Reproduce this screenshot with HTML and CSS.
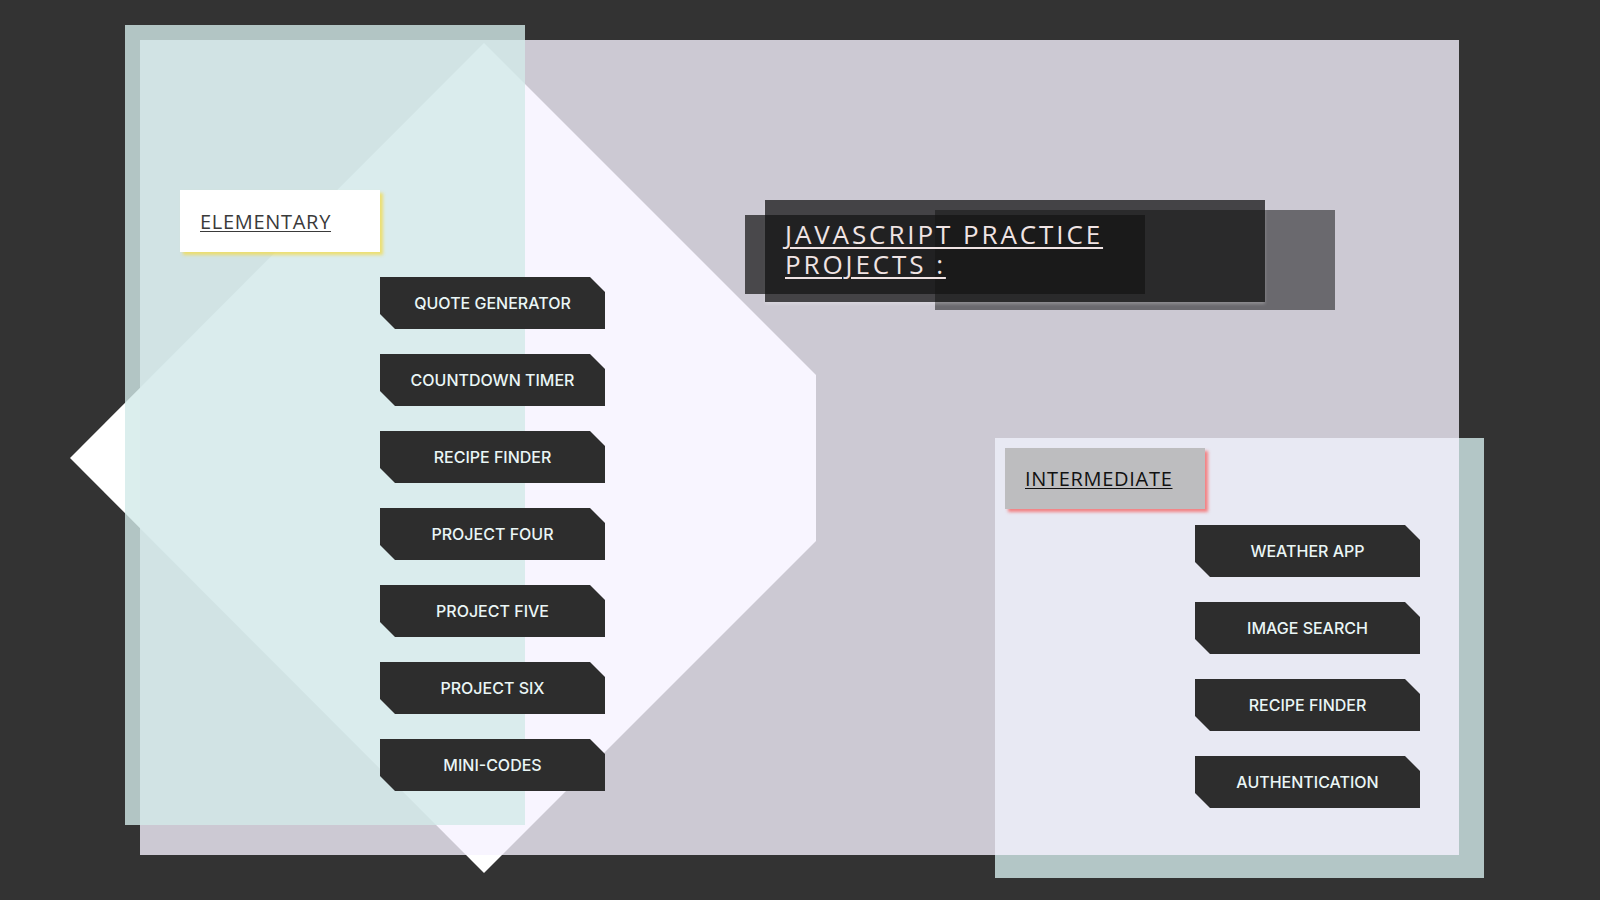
FILE: index.html
```html
<!DOCTYPE html>
<html lang="en">
<head>
<meta charset="utf-8">
<title>JavaScript Practice Projects</title>
<link rel="stylesheet" href="styles.css">
</head>
<body>
<main class="stage">
  <div class="back-card"></div>
  <svg class="diamond" width="1600" height="900" viewBox="0 0 1600 900" aria-hidden="true">
    <polygon points="484,43 816,375 816,541 484,873 70,458" fill="#ffffff"/>
  </svg>
  <div class="sheet"></div>

  <section class="panel panel-elementary">
    <h2 class="tag tag-elementary"><a href="#">ELEMENTARY</a></h2>
    <nav class="btn-list">
      <a class="btn" href="#">QUOTE GENERATOR</a>
      <a class="btn" href="#">COUNTDOWN TIMER</a>
      <a class="btn" href="#">RECIPE FINDER</a>
      <a class="btn" href="#">PROJECT FOUR</a>
      <a class="btn" href="#">PROJECT FIVE</a>
      <a class="btn" href="#">PROJECT SIX</a>
      <a class="btn" href="#">MINI-CODES</a>
    </nav>
  </section>

  <header class="title">
    <div class="title-shade"></div>
    <div class="title-frame"></div>
    <h1 class="title-text"><a href="#">JAVASCRIPT PRACTICE<br>PROJECTS :</a></h1>
  </header>

  <section class="panel panel-intermediate">
    <h2 class="tag tag-intermediate"><a href="#">INTERMEDIATE</a></h2>
    <nav class="btn-list">
      <a class="btn" href="#">WEATHER APP</a>
      <a class="btn" href="#">IMAGE SEARCH</a>
      <a class="btn" href="#">RECIPE FINDER</a>
      <a class="btn" href="#">AUTHENTICATION</a>
    </nav>
  </section>
</main>
</body>
</html>
```

FILE: styles.css
```css
* {
  box-sizing: border-box;
}

html, body {
  margin: 0;
  padding: 0;
}

body {
  background: #333333;
  font-family: "Inter", "Liberation Sans", sans-serif;
  overflow: hidden;
}

.stage {
  position: relative;
  width: 1600px;
  height: 900px;
}

.back-card {
  position: absolute;
  left: 995px;
  top: 438px;
  width: 489px;
  height: 440px;
  background: #b3c6c6;
}

.diamond {
  position: absolute;
  left: 0;
  top: 0;
}

.sheet {
  position: absolute;
  left: 140px;
  top: 40px;
  width: 1319px;
  height: 815px;
  background: rgba(246, 242, 255, 0.79);
}

.panel {
  position: absolute;
  display: flex;
  flex-direction: column;
  align-items: flex-start;
}

.panel-elementary {
  left: 125px;
  top: 25px;
  width: 400px;
  height: 800px;
  padding: 165px 0 0 55px;
  background: rgba(210, 234, 233, 0.8);
  gap: 25px;
}

.panel-intermediate {
  left: 995px;
  top: 438px;
  width: 489px;
  height: 440px;
  padding: 10px 0 0 10px;
  gap: 16px;
}

.tag {
  margin: 0;
  width: 200px;
  height: 62px;
  padding: 0 20px;
  display: flex;
  align-items: center;
  font-family: "Open Sans", "Liberation Sans", sans-serif;
  font-weight: 400;
  font-size: 20px;
  letter-spacing: 0.7px;
}

.tag a {
  color: inherit;
  text-decoration: underline;
  text-decoration-thickness: 1px;
  text-underline-offset: 2px;
}

.tag-elementary {
  background: #ffffff;
  color: #3a3a3a;
  box-shadow: 3px 3px 3px rgba(240, 220, 90, 0.85);
}

.tag-intermediate {
  height: 61px;
  background: #bdbdbf;
  color: #111111;
  box-shadow: 3px 3px 3px rgba(245, 110, 110, 0.85);
}

.btn-list {
  display: flex;
  flex-direction: column;
  gap: 25px;
  margin-left: 200px;
}

.panel-intermediate .btn-list {
  margin-left: 190px;
}

.btn {
  display: flex;
  align-items: center;
  justify-content: center;
  width: 225px;
  height: 52px;
  background: #2d2d2d;
  color: #eaf6f6;
  font-size: 16px;
  font-weight: 500;
  text-decoration: none;
  clip-path: polygon(0 0, calc(100% - 15px) 0, 100% 15px, 100% 100%, 15px 100%, 0 calc(100% - 15px));
}

.title {
  position: absolute;
  left: 745px;
  top: 200px;
  width: 590px;
  height: 110px;
}

.title-shade {
  position: absolute;
  left: 190px;
  top: 10px;
  width: 400px;
  height: 100px;
  background: rgba(0, 0, 0, 0.48);
}

.title-frame {
  position: absolute;
  left: 20px;
  top: 0;
  width: 500px;
  height: 102px;
  background: rgba(20, 20, 20, 0.74);
  box-shadow: 0 2px 3px rgba(255, 255, 255, 0.25);
}

.title-text {
  position: absolute;
  left: 0;
  top: 15px;
  width: 400px;
  height: 79px;
  margin: 0;
  padding: 4px 0 0 40px;
  background: rgba(20, 20, 20, 0.71);
  font-family: "Open Sans", "Liberation Sans", sans-serif;
  font-weight: 400;
  font-size: 26px;
  line-height: 30px;
  letter-spacing: 2.9px;
}

.title-text a {
  color: #f0e4e4;
  text-decoration: underline;
  text-decoration-thickness: 2px;
  text-underline-offset: 3px;
}
```
